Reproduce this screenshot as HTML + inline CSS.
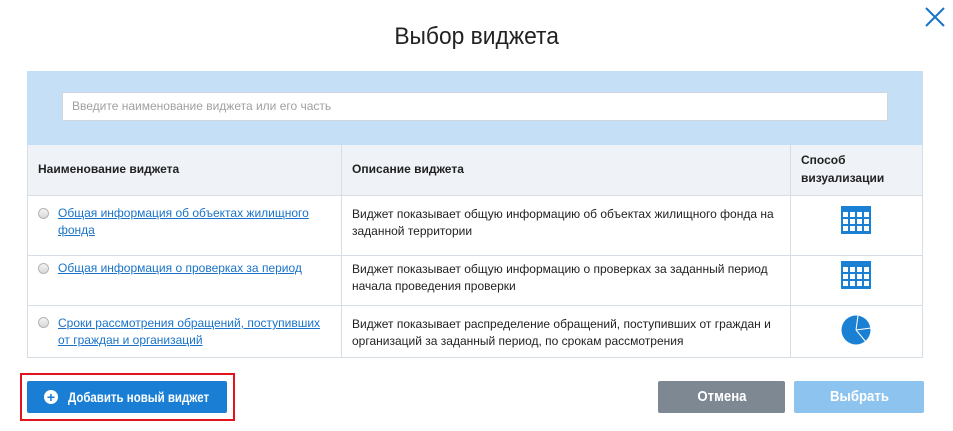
<!DOCTYPE html>
<html><head><meta charset="utf-8"><style>
body{margin:0;width:953px;height:431px;background:#fff;font-family:"Liberation Sans",sans-serif;position:relative;overflow:hidden;color:#222}
.a{position:absolute}
.t{font-size:12px;line-height:17px}
a{color:#1a73c8;text-decoration:underline}
.rad{width:11px;height:11px;border-radius:50%;border:1px solid #b5b5b5;background:linear-gradient(#f4f4f4,#d8d8d8);box-sizing:border-box}
.hl{background:#d6dde4}
.btn{color:#fff;font-size:14px;font-weight:bold;line-height:32px;border-radius:2px;white-space:nowrap}
.nar{display:inline-block;transform:scaleX(0.88);transform-origin:left center}
</style></head><body>
<div class="a" style="left:0;top:23px;width:953px;text-align:center;font-size:24px;color:#222"><span style="display:inline-block;transform:scaleX(0.95)">Выбор виджета</span></div>
<svg class="a" style="left:924px;top:6px" width="22" height="22"><path d="M2 2L20 20M20 2L2 20" stroke="#1a73c8" stroke-width="2"/></svg>
<div class="a" style="left:27px;top:71px;width:896px;height:74px;background:#c5e0f6"></div>
<div class="a" style="left:62px;top:92px;width:826px;height:29px;background:#fff;border:1px solid #cfd6dd;box-sizing:border-box"></div>
<div class="a" style="left:72px;top:99px;font-size:12px;color:#a0a0a0">Введите наименование виджета или его часть</div>
<div class="a" style="left:27px;top:145px;width:896px;height:50px;background:#eff3f7"></div>
<div class="a hl" style="left:27px;top:145px;width:1px;height:213px"></div>
<div class="a hl" style="left:341px;top:145px;width:1px;height:213px"></div>
<div class="a hl" style="left:790px;top:145px;width:1px;height:213px"></div>
<div class="a hl" style="left:922px;top:145px;width:1px;height:213px"></div>
<div class="a hl" style="left:27px;top:195px;width:896px;height:1px"></div>
<div class="a hl" style="left:27px;top:255px;width:896px;height:1px"></div>
<div class="a hl" style="left:27px;top:305px;width:896px;height:1px"></div>
<div class="a hl" style="left:27px;top:357px;width:896px;height:1px"></div>
<div class="a t" style="left:38px;top:161px;font-weight:bold;font-size:12px">Наименование виджета</div>
<div class="a t" style="left:352px;top:161px;font-weight:bold">Описание виджета</div>
<div class="a t" style="left:801px;top:151px;font-weight:bold;line-height:18px">Способ<br>визуализации</div>

<div class="a rad" style="left:38px;top:208px"></div>
<div class="a t" style="left:58px;top:205px;width:270px"><a>Общая информация об объектах жилищного фонда</a></div>
<div class="a t" style="left:352px;top:206px;width:430px">Виджет показывает общую информацию об объектах жилищного фонда на заданной территории</div>
<div class="a rad" style="left:38px;top:263px"></div>
<div class="a t" style="left:58px;top:260px"><a>Общая информация о проверках за период</a></div>
<div class="a t" style="left:352px;top:261px;width:430px">Виджет показывает общую информацию о проверках за заданный период начала проведения проверки</div>
<div class="a rad" style="left:38px;top:317px"></div>
<div class="a t" style="left:58px;top:315px;width:270px"><a>Сроки рассмотрения обращений, поступивших от граждан и организаций</a></div>
<div class="a t" style="left:352px;top:316px;width:430px">Виджет показывает распределение обращений, поступивших от граждан и организаций за заданный период, по срокам рассмотрения</div>

<svg class="a" style="left:841px;top:206px" width="30" height="28"><rect width="30" height="28" fill="#1a80d4"/><g fill="#fff"><rect x="2" y="6" width="5" height="5"/><rect x="9" y="6" width="5" height="5"/><rect x="16" y="6" width="5" height="5"/><rect x="23" y="6" width="5" height="5"/><rect x="2" y="13" width="5" height="5"/><rect x="9" y="13" width="5" height="5"/><rect x="16" y="13" width="5" height="5"/><rect x="23" y="13" width="5" height="5"/><rect x="2" y="20" width="5" height="5"/><rect x="9" y="20" width="5" height="5"/><rect x="16" y="20" width="5" height="5"/><rect x="23" y="20" width="5" height="5"/></g></svg>
<svg class="a" style="left:841px;top:261px" width="30" height="28"><rect width="30" height="28" fill="#1a80d4"/><g fill="#fff"><rect x="2" y="6" width="5" height="5"/><rect x="9" y="6" width="5" height="5"/><rect x="16" y="6" width="5" height="5"/><rect x="23" y="6" width="5" height="5"/><rect x="2" y="13" width="5" height="5"/><rect x="9" y="13" width="5" height="5"/><rect x="16" y="13" width="5" height="5"/><rect x="23" y="13" width="5" height="5"/><rect x="2" y="20" width="5" height="5"/><rect x="9" y="20" width="5" height="5"/><rect x="16" y="20" width="5" height="5"/><rect x="23" y="20" width="5" height="5"/></g></svg>
<svg class="a" style="left:841px;top:315px" width="32" height="32"><circle cx="15" cy="15" r="14.5" fill="#1a80d4"/><path d="M15 15L17 0.5M15 15L30 13M15 15L25 27" stroke="#fff" stroke-width="1"/></svg>

<div class="a" style="left:20px;top:373px;width:215px;height:48px;border:2px solid #e3131d;box-sizing:border-box"></div>
<div class="a btn" style="left:27px;top:381px;width:200px;height:32px;background:#1a7fd4"><span style="position:absolute;left:17px;top:9px;width:14px;height:14px;border-radius:50%;background:#fff;color:#1a7fd4;font-size:14px;line-height:14px;text-align:center">+</span><span class="a nar" style="left:41px;top:0;transform:scaleX(0.82)">Добавить новый виджет</span></div>
<div class="a btn" style="left:658px;top:381px;width:127px;height:32px;background:#7d8893;text-align:center;font-size:15px"><span class="nar" style="transform-origin:center">Отмена</span></div>
<div class="a btn" style="left:794px;top:381px;width:130px;height:32px;background:#8dc4ef;text-align:center;font-size:15px"><span class="nar" style="transform-origin:center">Выбрать</span></div>
</body></html>
